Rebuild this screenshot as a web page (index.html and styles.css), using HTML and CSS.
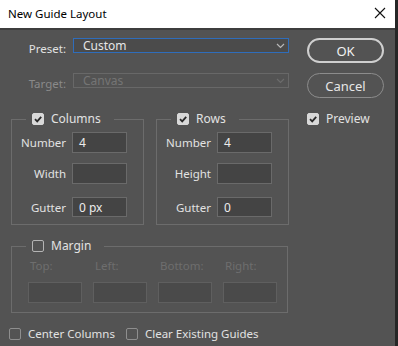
FILE: index.html
```html
<!DOCTYPE html>
<html>
<head>
<meta charset="utf-8">
<link rel="stylesheet" href="styles.css">
</head>
<body>
<div class="window">
  <div class="titlebar">
    <span class="title">New Guide Layout</span>
    <svg class="close" width="12" height="12" viewBox="0 0 12 12"><path d="M1 1 L11 11 M11 1 L1 11" stroke="#111" stroke-width="1.1" fill="none"/></svg>
  </div>
  <div class="content">
    <div class="main">
      <div class="field-row">
        <span class="lbl">Preset:</span>
        <div class="select active"><span>Custom</span><svg class="chev" width="9" height="6" viewBox="0 0 9 6"><path d="M1 1 L4.5 4.5 L8 1" stroke="#b8b8b8" stroke-width="1.2" fill="none"/></svg></div>
      </div>
      <div class="field-row target">
        <span class="lbl dis">Target:</span>
        <div class="select disabled"><span>Canvas</span><svg class="chev" width="9" height="6" viewBox="0 0 9 6"><path d="M1 1 L4.5 4.5 L8 1" stroke="#6c6c6c" stroke-width="1.2" fill="none"/></svg></div>
      </div>
      <div class="groups">
        <fieldset class="group">
          <legend><span class="cb checked"><svg width="12" height="12" viewBox="0 0 12 12"><path d="M3 6.2 L5.2 8.4 L9.2 3.8" stroke="#2a2a2a" stroke-width="1.8" fill="none"/></svg></span>Columns</legend>
          <div class="grid">
            <span class="glbl">Number</span><div class="input">4</div>
            <span class="glbl">Width</span><div class="input"></div>
            <span class="glbl gut">Gutter</span><div class="input gut">0 px</div>
          </div>
        </fieldset>
        <fieldset class="group">
          <legend><span class="cb checked"><svg width="12" height="12" viewBox="0 0 12 12"><path d="M3 6.2 L5.2 8.4 L9.2 3.8" stroke="#2a2a2a" stroke-width="1.8" fill="none"/></svg></span>Rows</legend>
          <div class="grid">
            <span class="glbl">Number</span><div class="input">4</div>
            <span class="glbl">Height</span><div class="input"></div>
            <span class="glbl gut">Gutter</span><div class="input gut">0</div>
          </div>
        </fieldset>
      </div>
      <fieldset class="group margin">
        <legend><span class="cb"></span>Margin</legend>
        <div class="mgrid">
          <div class="mcol"><span class="mlbl">Top:</span><div class="input dis"></div></div>
          <div class="mcol"><span class="mlbl">Left:</span><div class="input dis"></div></div>
          <div class="mcol"><span class="mlbl">Bottom:</span><div class="input dis"></div></div>
          <div class="mcol"><span class="mlbl">Right:</span><div class="input dis"></div></div>
        </div>
      </fieldset>
      <div class="bottom-row">
        <label class="check"><span class="cb dim"></span>Center Columns</label>
        <label class="check"><span class="cb dim"></span>Clear Existing Guides</label>
      </div>
    </div>
    <div class="side">
      <div class="btn primary">OK</div>
      <div class="btn">Cancel</div>
      <label class="check preview"><span class="cb checked"><svg width="12" height="12" viewBox="0 0 12 12"><path d="M3 6.2 L5.2 8.4 L9.2 3.8" stroke="#2a2a2a" stroke-width="1.8" fill="none"/></svg></span>Preview</label>
    </div>
  </div>
</div>
</body>
</html>
```

FILE: styles.css
```css
* { box-sizing: border-box; }
html, body { margin: 0; padding: 0; background: #535353; }
body { font-family: "Noto Sans", "Open Sans", sans-serif; font-size: 11.5px; color: #e2e2e2; }

.window {
  width: 398px;
  height: 346px;
  background: #535353;
  border-right: 3px solid #262626;
  overflow: hidden;
}

.titlebar {
  height: 30px;
  background: #fff;
  border-bottom: 2px solid #3e3e3e;
  display: flex;
  align-items: center;
  justify-content: space-between;
  padding: 0 9px 2px 8px;
}
.title { color: #000; font-size: 11.5px; }
.close { display: block; margin-top: -1px; }

.content {
  display: flex;
  padding: 8px 0 0 11px;
}
.main { width: 278px; }

.field-row {
  display: flex;
  align-items: flex-start;
  height: 15px;
}
.field-row.target { margin-top: 20px; }
.lbl {
  width: 55px;
  text-align: right;
  margin-right: 7px;
  line-height: 15px;
  padding-top: 3px;
}
.lbl.dis { color: #8a8a8a; }

.select {
  width: 216px;
  height: 15px;
  display: flex;
  align-items: center;
  justify-content: space-between;
  padding: 0 3px 0 9px;
  line-height: 13px;
}
.select.active { border: 1.5px solid #2f6dbb; background: #4b4b4b; color: #e6e6e6; font-size: 12px; }
.select.disabled { border: 1px solid #686868; color: #757575; font-size: 12px; }
.chev { display: block; }

.groups {
  display: flex;
  gap: 12px;
  margin-top: 25px;
}
.group {
  margin: 0;
  border: 1px solid #6c6c6c;
  padding: 7px 0 7px 0;
  width: 133px;
  min-width: 0;
}
.group legend {
  margin-left: 14px;
  padding: 0 13px 0 6px;
  height: 12px;
  line-height: 12px;
  display: flex;
  align-items: center;
  gap: 7px;
  font-size: 12px;
}
.cb {
  width: 12px;
  height: 12px;
  border-radius: 2px;
  border: 1px solid #b4b4b4;
  flex: none;
  display: inline-block;
}
.cb svg { display: block; margin: -1px; }
.cb.checked { background: #d9d9d9; border-color: #d9d9d9; }
.cb.dim { border-color: #8e8e8e; }

.grid {
  display: grid;
  grid-template-columns: 54px 55px;
  column-gap: 6px;
  row-gap: 10px;
  align-items: center;
}
.glbl { text-align: right; }
.glbl.gut, .input.gut { margin-top: 3px; }
.input {
  height: 21px;
  background: #444444;
  border: 1px solid #6a6a6a;
  padding: 0 6px;
  line-height: 19px;
  color: #ececec;
  font-size: 12px;
}
.input.gut { height: 20px; }

.margin {
  width: 277px;
  margin-top: 15px;
  padding: 7px 0 9px 16px;
}
.group.margin legend { margin-left: -2px; }
.mgrid {
  display: flex;
  gap: 11px;
}
.mcol {
  width: 54px;
  display: flex;
  flex-direction: column;
}
.mlbl {
  color: #6e6e6e;
  line-height: 14px;
  padding-left: 2px;
  margin-bottom: 9px;
}
.input.dis { background: #4a4a4a; border-color: #5f5f5f; }

.bottom-row {
  display: flex;
  gap: 11px;
  margin: 15px 0 0 -2px;
}
.check {
  display: flex;
  align-items: center;
  gap: 7px;
  line-height: 12px;
  font-size: 11.5px;
}

.side {
  margin-left: 18px;
  width: 77px;
  display: flex;
  flex-direction: column;
}
.btn {
  height: 25px;
  border-radius: 13px;
  border: 1.5px solid #8c8c8c;
  display: flex;
  align-items: center;
  justify-content: center;
  font-size: 13px;
  color: #e6e6e6;
  margin-bottom: 10px;
}
.btn.primary { border: 2px solid #cfcfcf; color: #f2f2f2; }
.check.preview { margin-top: 5px; font-size: 12px; }
```
